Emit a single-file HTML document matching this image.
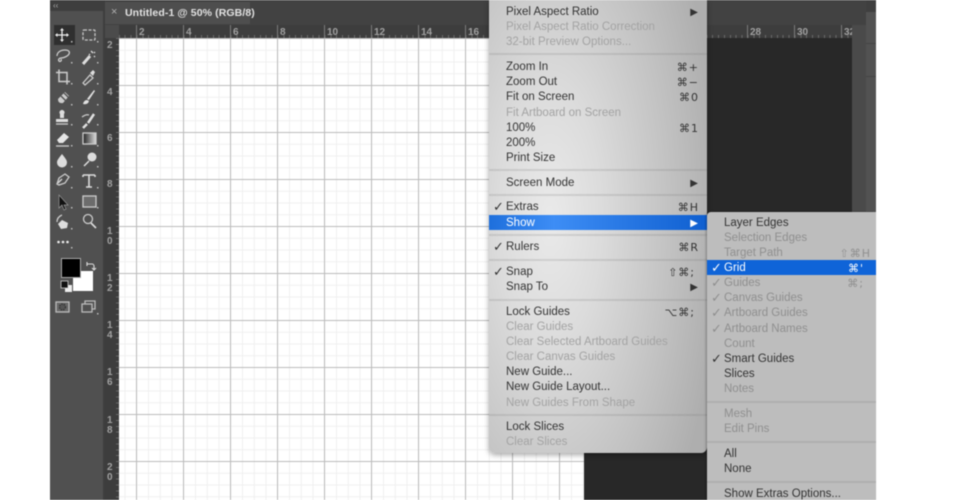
<!DOCTYPE html>
<html><head><meta charset="utf-8"><style>
html,body{margin:0;padding:0;background:#fff}
#p{position:relative;width:980px;height:500px;overflow:hidden;background:#fff;font-family:"Liberation Sans","DejaVu Sans",sans-serif;filter:blur(.4px)}
#p div{position:absolute}
.rn{color:#a0a0a0;font-size:10px;line-height:10px;font-weight:bold}
.r{left:0;right:0;height:15px;line-height:17px;font-size:11.5px;color:#333;padding-left:17px;white-space:nowrap}
.d{color:#a3a3a3}
.h{color:#fff}
.r b{position:absolute;right:8px;top:0;font-weight:normal;letter-spacing:1px;font-family:"DejaVu Sans","Liberation Sans",sans-serif;font-size:11px}
.r i{position:absolute;font-style:normal;right:9px;top:0;font-size:10px;font-family:"DejaVu Sans",sans-serif}
.r u{position:absolute;left:4px;top:0;text-decoration:none;font-size:13px;font-family:"DejaVu Sans",sans-serif;font-weight:bold}
.sp{left:0;right:0;height:2px;background:rgba(120,120,120,.2)}
#s .d{color:#8f8f8f}
</style></head><body><div id="p">
<div style="left:50px;top:0;width:826px;height:500px;background:#484848"></div>
<div style="left:50px;top:0;width:53px;height:500px;background:#505050"></div>
<div style="left:50px;top:0;width:53px;height:11px;background:#3e3e3e"></div>
<div style="left:53px;top:2px;color:#aaa;font-size:8px;line-height:8px">‹‹</div>
<div style="left:103px;top:0;width:2px;height:500px;background:#3e3e3e"></div>
<div style="left:105px;top:0;width:761px;height:25px;background:#424242"></div>
<div style="left:105px;top:2px;width:145px;height:22px;background:#4e4e4e"></div>
<div style="left:111px;top:7px;color:#b0b0b0;font-size:11px;line-height:11px">×</div>
<div style="left:125px;top:7px;color:#e2e2e2;font-size:10.5px;line-height:13px;font-weight:bold;white-space:nowrap;letter-spacing:.1px">Untitled-1 @ 50% (RGB/8)</div>
<div style="left:852px;top:25px;width:14px;height:475px;background:#4a4a4a"></div>
<div style="left:866px;top:0;width:10px;height:500px;background:#525252"></div>
<div style="left:866px;top:0;width:10px;height:12px;background:#3f3f3f"></div>
<div style="left:866px;top:43px;width:10px;height:1px;background:#444"></div>
<div style="left:866px;top:76px;width:10px;height:1px;background:#444"></div>
<div style="left:105px;top:25px;width:747px;height:13px;background:repeating-linear-gradient(90deg,#6a6a6a 0 1px,transparent 1px 5.875px) 2px 10px/100% 3px no-repeat,#3d3d3d"></div>
<div style="left:105px;top:25px;width:14px;height:13px;background:#4b4b4b"></div>
<div style="left:105px;top:38px;width:14px;height:462px;background:repeating-linear-gradient(180deg,#6a6a6a 0 1px,transparent 1px 5.875px) 11px 0/3px 100% no-repeat,#3d3d3d"></div>
<div style="left:136px;top:25px;width:716px;height:13px;background:repeating-linear-gradient(90deg,#7a7a7a 0 1px,transparent 1px 47px)"></div>
<div class="rn" style="left:139px;top:28px">2</div><div class="rn" style="left:186px;top:28px">4</div><div class="rn" style="left:233px;top:28px">6</div><div class="rn" style="left:280px;top:28px">8</div><div class="rn" style="left:327px;top:28px">10</div><div class="rn" style="left:374px;top:28px">12</div><div class="rn" style="left:421px;top:28px">14</div><div class="rn" style="left:468px;top:28px">16</div><div class="rn" style="left:750px;top:28px">28</div><div class="rn" style="left:797px;top:28px">30</div><div class="rn" style="left:844px;top:28px;width:8px;overflow:hidden">32</div>
<div class="rn" style="left:107px;top:41px">2</div><div class="rn" style="left:107px;top:88px">4</div><div class="rn" style="left:107px;top:134px">6</div><div class="rn" style="left:107px;top:180px">8</div>
<div class="rn" style="left:107px;top:227px">1<br>0</div><div class="rn" style="left:107px;top:274px">1<br>2</div><div class="rn" style="left:107px;top:321px">1<br>4</div><div class="rn" style="left:107px;top:368px">1<br>6</div><div class="rn" style="left:107px;top:416px">1<br>8</div><div class="rn" style="left:107px;top:463px">2<br>0</div>
<div style="left:119px;top:38px;width:465px;height:462px;background-color:#fff;background-image:linear-gradient(90deg,#bcbcbc 1px,transparent 1px),linear-gradient(0deg,transparent calc(100% - 1px),#bcbcbc calc(100% - 1px)),linear-gradient(90deg,#f0f0f0 1px,transparent 1px),linear-gradient(0deg,transparent calc(100% - 1px),#f0f0f0 calc(100% - 1px));background-size:47px 47px,47px 47px,11.75px 11.75px,11.75px 11.75px;background-position:17px 0,0 47px,5.5px 0,0 0"></div>
<div style="left:584px;top:38px;width:268px;height:462px;background:#282828"></div>
<div style="left:54px;top:25px;width:21px;height:20px;background:#2f2f2f"></div>
<svg style="position:absolute;left:50px;top:20px" width="54" height="300" viewBox="0 0 54 300" fill="none" stroke="#d8d8d8" stroke-width="1.3">
<path d="M12 10V20M7 15H17" stroke="#eee"/><path d="M12 8l-2 2.500h4zM12 22l-2-2.500h4zM5 15l2.500-2v4zM19 15l-2.500-2v4z" fill="#eee" stroke="none"/>
<rect x="33" y="10" width="12" height="10" rx="1" stroke-dasharray="3 1.500" stroke="#c8c8c8"/>
<path d="M7 36c0-4 4-6 8-6s5 2 4 4-5 4-8 4c-2 0-3 2-2 3s3 0 2-2" stroke="#ccc"/>
<path d="M33 44l7-8" stroke-width="3" stroke="#ddd"/><path d="M41 31l2 2M45 32l-1 1M40 35l-1-1M44 36l1 1" stroke="#ddd"/>
<g transform="translate(0 -1.500)"><path d="M9 51v12h11M6 54h11v12" stroke="#ccc" stroke-width="1.500"/></g>
<g transform="translate(0 -2)"><path d="M33 65l7-8 3 3-8 7z" stroke="#ccc"/><path d="M40 55l3-3 2 2-2 4z" fill="#ddd" stroke="none"/></g>
<g transform="translate(0 -4)"><path d="M8 83l7-7 4 4-6 7q-5 1-5-4z" fill="#ccc" stroke="none"/><path d="M11 80l5 5M14 77l5 5" stroke="#505050"/></g>
<g transform="translate(0 -3)"><path d="M37 82l7-9 1 1-6 9z" fill="#e0e0e0" stroke="none"/><path d="M33 87q1-4 4-4l2 1q-1 4-6 3z" fill="#e0e0e0" stroke="none"/></g>
<path d="M10 94a2.500 2.500 0 1 1 4 0v4h-4z" fill="#ddd" stroke="none"/><path d="M6 99h12v3H6z" fill="#ddd" stroke="none"/><path d="M6 104h12" stroke="#ccc"/>
<path d="M38 103l6-9" stroke="#e0e0e0" stroke-width="2.500"/><path d="M33 108l4-4" stroke="#e0e0e0" stroke-width="2.500"/><path d="M32 97q4-3 7-2" stroke="#ccc"/>
<g transform="translate(0 -4)"><path d="M7 124l7-7 5 4-6 6H9z" fill="#e5e5e5" stroke="none"/><path d="M6 130h13" stroke="#ccc"/></g>
<defs><linearGradient id="g"><stop offset="0" stop-color="#222"/><stop offset="1" stop-color="#ddd"/></linearGradient></defs><rect x="33" y="113" width="13" height="11" fill="url(#g)" stroke="#ccc"/>
<path d="M12 134c3 4 5 6 5 8.500a5 5 0 0 1-10 0c0-2.500 2-4.500 5-8.500z" fill="#ddd" stroke="none"/>
<circle cx="42" cy="137" r="4.500" fill="#ddd" stroke="none"/><path d="M39 141l-5 5" stroke="#ddd" stroke-width="1.500"/>
<g transform="translate(0 -2)"><path d="M7 166l2-6 6-4 4 3-4 6-6 2z" stroke="#ccc"/><path d="M8 165l4-4"/></g>
<path d="M33 155h12M39 155v12M36 167h6M33 155v2M45 155v2" stroke="#ddd" stroke-width="1.600"/>
<path d="M9 175v13l3-3 2 5 2-1-2-4h4z" fill="#111" stroke="#999" stroke-width=".7"/>
<rect x="33" y="176" width="13" height="11" fill="#6c6c6c" stroke="#ccc"/>
<g transform="translate(0 3)"><path d="M7 199q0-5 5-7" stroke="#ccc"/><path d="M8 201l4-4 6 3-1 5-6 1z" fill="#ddd" stroke="none"/></g>
<circle cx="38" cy="199" r="4.500" stroke="#ccc"/><path d="M41 203l5 5" stroke="#ddd" stroke-width="1.600"/>
<circle cx="8.500" cy="222" r="1.300" fill="#eee" stroke="none"/><circle cx="13" cy="222" r="1.300" fill="#eee" stroke="none"/><circle cx="17.500" cy="222" r="1.300" fill="#eee" stroke="none"/>
<g fill="#bbb" stroke="none"><rect x="21" y="21" width="1.500" height="1.500"/><rect x="47" y="21" width="1.500" height="1.500"/><rect x="21" y="42" width="1.500" height="1.500"/><rect x="47" y="42" width="1.500" height="1.500"/><rect x="21" y="63" width="1.500" height="1.500"/><rect x="47" y="63" width="1.500" height="1.500"/><rect x="21" y="84" width="1.500" height="1.500"/><rect x="47" y="84" width="1.500" height="1.500"/><rect x="21" y="104" width="1.500" height="1.500"/><rect x="47" y="104" width="1.500" height="1.500"/><rect x="21" y="125" width="1.500" height="1.500"/><rect x="47" y="125" width="1.500" height="1.500"/><rect x="21" y="146" width="1.500" height="1.500"/><rect x="47" y="146" width="1.500" height="1.500"/><rect x="21" y="167" width="1.500" height="1.500"/><rect x="47" y="167" width="1.500" height="1.500"/><rect x="21" y="187" width="1.500" height="1.500"/><rect x="47" y="187" width="1.500" height="1.500"/><rect x="21" y="208" width="1.500" height="1.500"/><rect x="21" y="227" width="1.500" height="1.500"/><rect x="47" y="293" width="1.500" height="1.500"/></g>
<path d="M37 244h5a2 2 0 0 1 2 2v3M37 242v4M42 248l2 2 2-2" stroke="#ddd" stroke-width="1.100"/>
<rect x="15" y="265" width="7" height="7" fill="#eee" stroke="none"/><rect x="11" y="261" width="7" height="7" fill="#111" stroke="#ccc" stroke-width=".8"/>
<rect x="6" y="282" width="13" height="10" stroke="#bbb" fill="#666"/><circle cx="12.500" cy="287" r="3" stroke="#333" fill="#555" stroke-dasharray="1.500 1"/>
<rect x="32" y="284" width="10" height="8" stroke="#bbb"/><path d="M35 284v-3h10v8h-3" stroke="#bbb"/>
</svg>
<div style="left:73px;top:271px;width:20px;height:20px;background:#fff"></div>
<div style="left:61px;top:258px;width:18px;height:18px;background:#000;border:1px solid #a8a8a8"></div>
<div style="left:489px;top:0;width:218px;height:453px;border-radius:0 0 6px 6px;background:radial-gradient(ellipse 170px 420px at 28% 48%,#eaeaea 0,#dcdcdc 30%,#c2c2c2 70%,#aeaeae 100%);box-shadow:0 2px 6px rgba(0,0,0,.35)">
<div class="r" style="top:4px">Pixel Aspect Ratio<i>▶</i></div>
<div class="r d" style="top:19px">Pixel Aspect Ratio Correction</div>
<div class="r d" style="top:34px">32-bit Preview Options...</div>
<div class="sp" style="top:53px"></div>
<div class="r" style="top:59px">Zoom In<b>⌘+</b></div>
<div class="r" style="top:74px">Zoom Out<b>⌘−</b></div>
<div class="r" style="top:89px">Fit on Screen<b>⌘0</b></div>
<div class="r d" style="top:104.500px">Fit Artboard on Screen</div>
<div class="r" style="top:119.500px">100%<b>⌘1</b></div>
<div class="r" style="top:134.500px">200%</div>
<div class="r" style="top:149.500px">Print Size</div>
<div class="sp" style="top:169px"></div>
<div class="r" style="top:174.500px">Screen Mode<i>▶</i></div>
<div class="sp" style="top:194px"></div>
<div class="r" style="top:199px"><u>✓</u>Extras<b>⌘H</b></div>
<div style="left:0;right:0;top:215px;height:15px;background:linear-gradient(90deg,#1e6fdc,#3d8df5 30%,#0f5fd0)"></div>
<div class="r h" style="top:214.500px">Show<i>▶</i></div>
<div class="sp" style="top:234px"></div>
<div class="r" style="top:239px"><u>✓</u>Rulers<b>⌘R</b></div>
<div class="sp" style="top:259px"></div>
<div class="r" style="top:264px"><u>✓</u>Snap<b style="right:12px">⇧⌘;</b></div>
<div class="r" style="top:279px">Snap To<i>▶</i></div>
<div class="sp" style="top:299px"></div>
<div class="r" style="top:304px">Lock Guides<b style="right:12px">⌥⌘;</b></div>
<div class="r d" style="top:319px">Clear Guides</div>
<div class="r d" style="top:334px">Clear Selected Artboard Guides</div>
<div class="r d" style="top:349px">Clear Canvas Guides</div>
<div class="r" style="top:364px">New Guide...</div>
<div class="r" style="top:379px">New Guide Layout...</div>
<div class="r d" style="top:394.500px">New Guides From Shape</div>
<div class="sp" style="top:414px"></div>
<div class="r" style="top:419px">Lock Slices</div>
<div class="r d" style="top:434px">Clear Slices</div>
</div>
<div id="s" style="left:707px;top:212px;width:169px;height:288px;background:#bdbdbd;box-shadow:-1px 0 2px rgba(0,0,0,.3);border-radius:4px 0 0 0">
<div class="r" style="top:2.500px">Layer Edges</div>
<div class="r d" style="top:17.500px">Selection Edges</div>
<div class="r d" style="top:32.500px">Target Path<b style="color:#8f8f8f;right:5px">⇧⌘H</b></div>
<div style="left:0;right:0;top:48px;height:15px;background:#0f64d8"></div>
<div class="r h" style="top:48px"><u>✓</u>Grid<b style="right:12px">⌘'</b></div>
<div class="r d" style="top:63px"><u>✓</u>Guides<b style="color:#8f8f8f;right:12px">⌘;</b></div>
<div class="r d" style="top:78px"><u>✓</u>Canvas Guides</div>
<div class="r d" style="top:93px"><u>✓</u>Artboard Guides</div>
<div class="r d" style="top:108.500px"><u>✓</u>Artboard Names</div>
<div class="r d" style="top:123.500px">Count</div>
<div class="r" style="top:138.500px"><u>✓</u>Smart Guides</div>
<div class="r" style="top:153.500px">Slices</div>
<div class="r d" style="top:168.500px">Notes</div>
<div class="sp" style="top:189px"></div>
<div class="r d" style="top:193.500px">Mesh</div>
<div class="r d" style="top:208.500px">Edit Pins</div>
<div class="sp" style="top:229px"></div>
<div class="r" style="top:233.500px">All</div>
<div class="r" style="top:248.500px">None</div>
<div class="sp" style="top:269px"></div>
<div class="r" style="top:273.500px">Show Extras Options...</div>
</div>
</div></body></html>
